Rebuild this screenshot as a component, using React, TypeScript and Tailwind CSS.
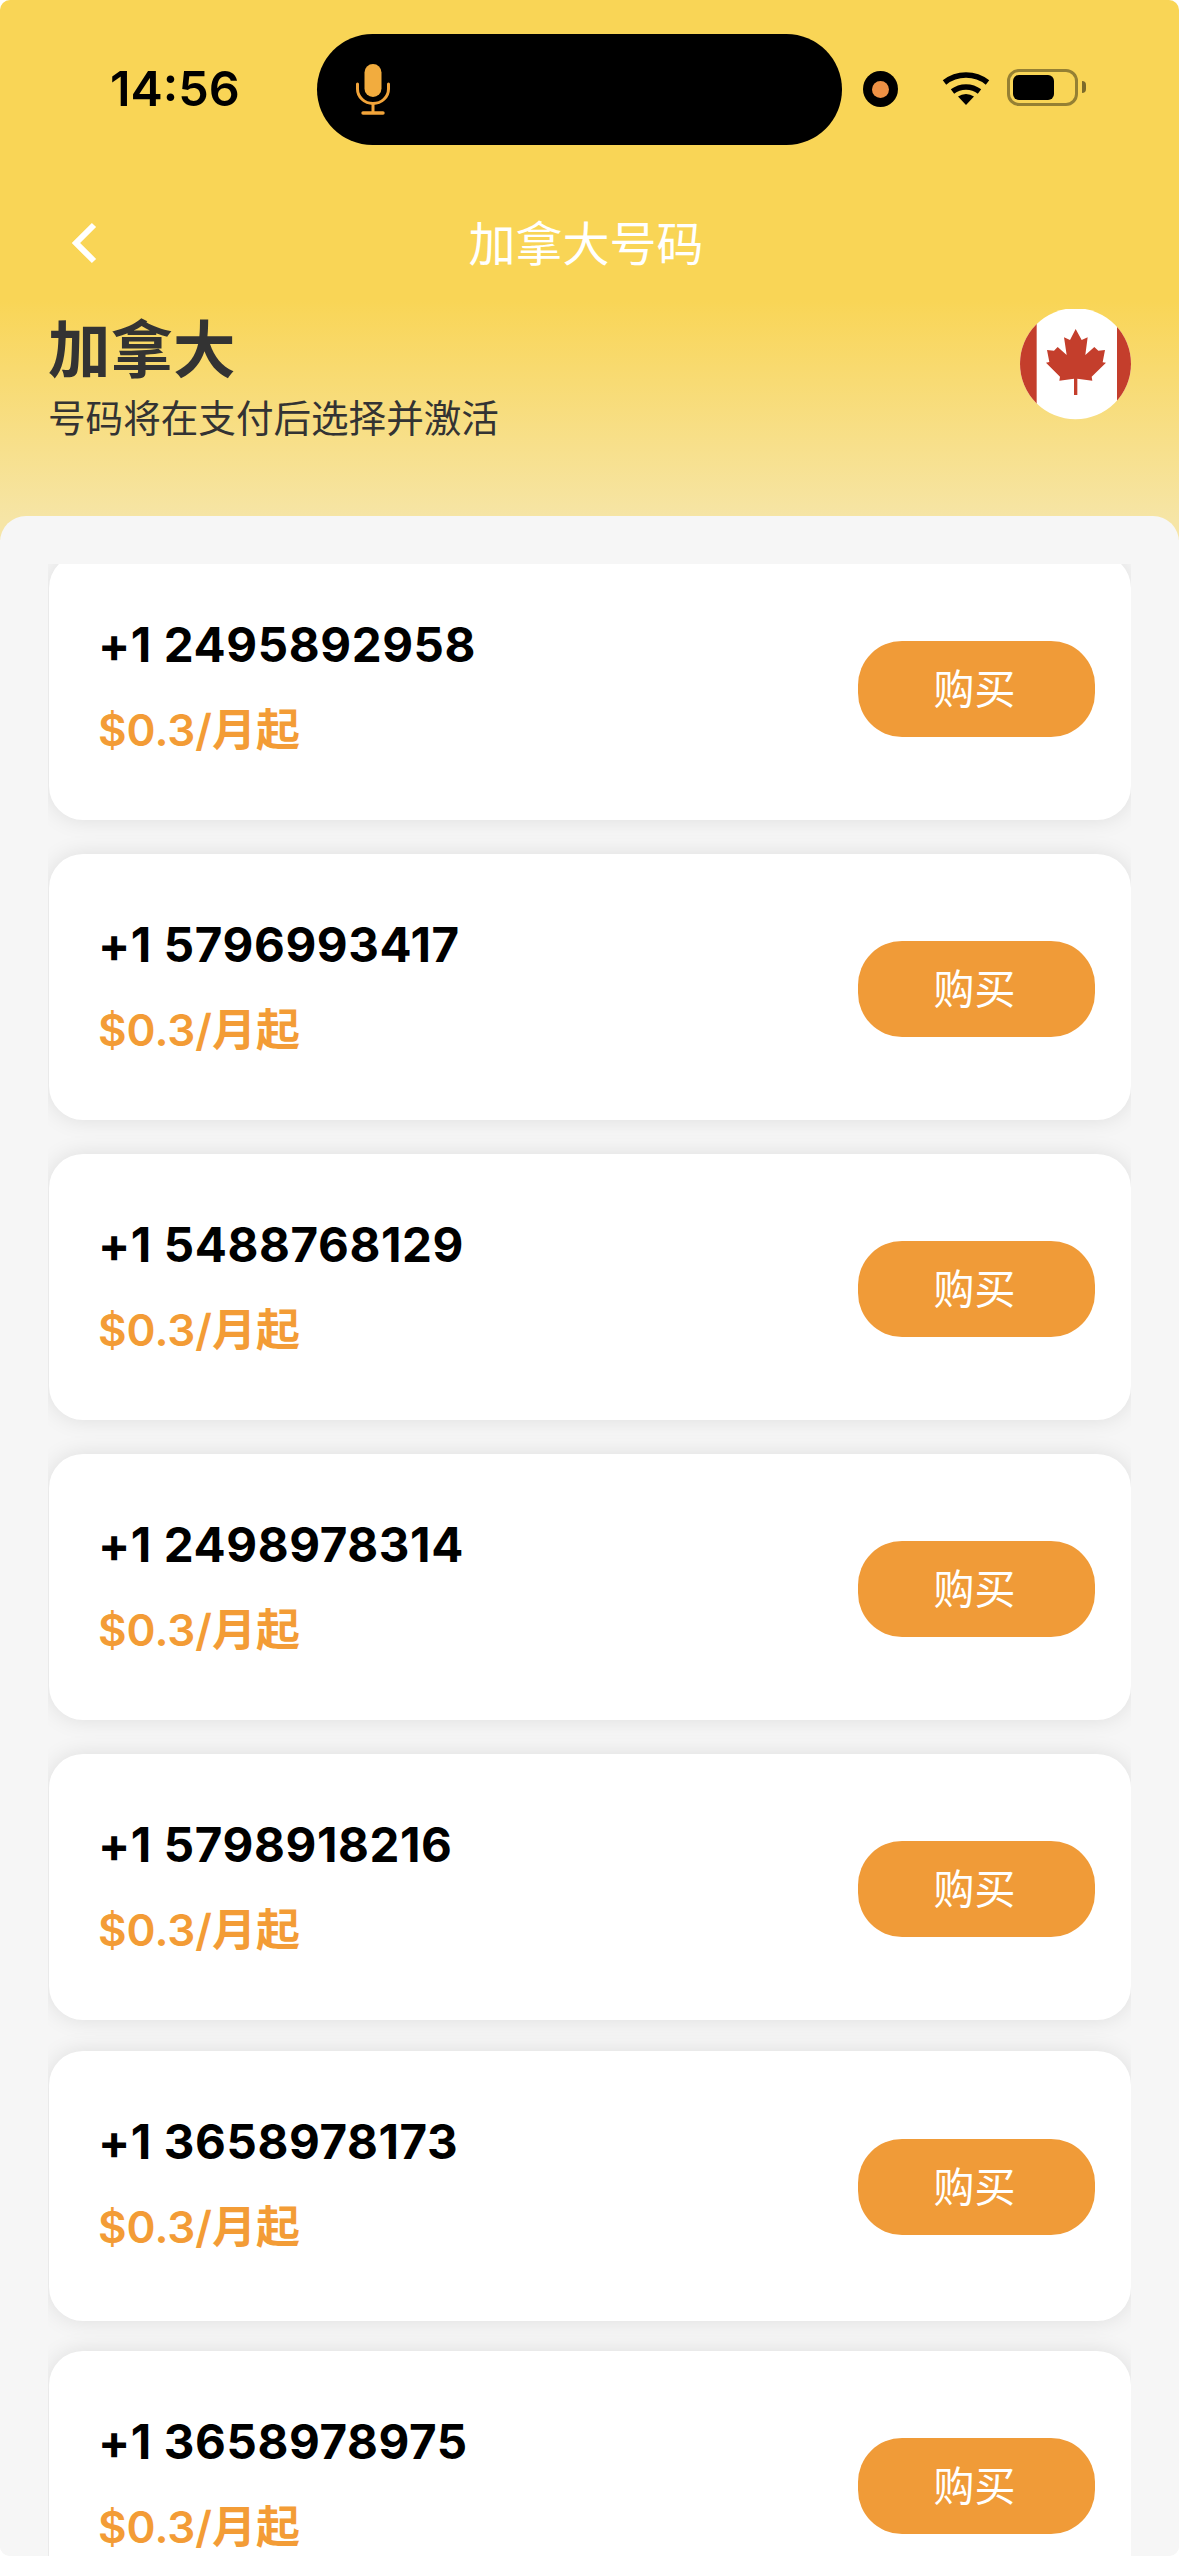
const numbers = [
  "+1 2495892958",
  "+1 5796993417",
  "+1 5488768129",
  "+1 2498978314",
  "+1 5798918216",
  "+1 3658978173",
  "+1 3658978975",
];

function MicIcon() {
  return (
    <svg width="34" height="51" viewBox="0 0 34 51" fill="none">
      <rect x="8.5" y="0" width="17" height="33" rx="8.5" fill="#f2ac3e" />
      <path d="M1.5 20v5a15.5 14.5 0 0 0 31 0v-5" stroke="#f2a43a" strokeWidth="3" strokeLinecap="round" />
      <path d="M17 39v9" stroke="#f2a43a" strokeWidth="3" />
      <path d="M7 49h20" stroke="#f2a43a" strokeWidth="3.4" strokeLinecap="round" />
    </svg>
  );
}

function WifiIcon() {
  return (
    <svg width="46" height="35" viewBox="0 0 46 35" fill="none" className="overflow-visible">
      <path d="M1.5 12.5a33 31 0 0 1 43 0" stroke="black" strokeWidth="5.5" />
      <path d="M9.5 21.5a21 19.5 0 0 1 27 0" stroke="black" strokeWidth="5.5" />
      <path d="M23 35L15 26.5a13 12 0 0 1 16 0Z" fill="black" />
    </svg>
  );
}

function CanadaFlag() {
  return (
    <svg width="111" height="111" viewBox="120 87 333 333" className="shrink-0">
      <defs>
        <clipPath id="flag-circle">
          <circle cx="286.5" cy="251" r="166.5" />
        </clipPath>
      </defs>
      <g clipPath="url(#flag-circle)">
        <rect x="120" y="87" width="333" height="333" fill="#ffffff" />
        <rect x="120" y="87" width="50" height="333" fill="#c43e2c" />
        <rect x="411" y="87" width="42" height="333" fill="#c43e2c" />
        <path
          fill="#c43e2c"
          d="M287 147L305 180L323 172L316 225L343 201L355 212L375 210L368 247L378 248L335 290L337 302L292 296V345H282V296L238 302L240 290L198 248L208 246L201 210L222 212L233 201L260 225L252 172L270 180Z"
        />
      </g>
    </svg>
  );
}

function NumberCard({ phone, className }: { phone: string; className: string }) {
  return (
    <div
      className={`shrink-0 ml-[1px] bg-white rounded-[34px] shadow-[0_0_22px_rgba(0,0,0,0.1)] flex items-center justify-between pl-[49px] pr-[36px] ${className}`}
    >
      <div className="flex flex-col mb-[1.5px]">
        <span className="text-[47.5px] leading-[56px] mt-[2px] tracking-[0.6px] font-bold text-black">{phone}</span>
        <span className="text-[44px] leading-[56px] mt-[29px] font-semibold text-[#f39c36]">$0.3/月起</span>
      </div>
      <button className="w-[237px] h-[96px] mt-[4px] pr-[4px] pt-[2px] rounded-[44px] bg-[#f09b38] text-white text-[41px] flex items-center justify-center">
        购买
      </button>
    </div>
  );
}

export default function App() {
  return (
    <div className="w-[1179px] h-[2556px] bg-white overflow-hidden">
      <div className="w-full h-full rounded-[10px] overflow-hidden flex flex-col bg-[#f6f6f6] font-[Inter,'Noto_Sans_CJK_SC',sans-serif]">
        <div className="h-[540px] shrink-0 -mb-[24px] bg-[linear-gradient(180deg,#f9d556_0px,#f9d556_300px,#f6e5a6_520px)]">
          <div className="h-[178px] flex items-center pl-[110px]">
            <span className="w-[207px] text-[48.5px] font-semibold text-black leading-none">14:56</span>
            <div className="w-[525px] h-[111px] bg-black rounded-full flex items-center pl-[39px]">
              <MicIcon />
            </div>
            <div className="ml-[21px] w-[35px] h-[36px] rounded-[50%] bg-black flex items-center justify-center">
              <div className="w-[17px] h-[17px] rounded-[50%] bg-[#ee9145]" />
            </div>
            <div className="ml-[45px] -mt-[3px]">
              <WifiIcon />
            </div>
            <div className="ml-[18px] -mt-[4px] flex items-center">
              <div className="w-[71px] h-[37px] rounded-[12px] border-[3px] border-black/40 p-[3px]">
                <div className="w-[41px] h-full rounded-[6px] bg-black" />
              </div>
              <div className="ml-[4px] w-[4px] h-[12px] rounded-r-[4px] bg-black/50" />
            </div>
          </div>
          <div className="h-[130px] grid grid-cols-[1fr_auto_1fr] items-center pl-[72px] pr-[79px]">
            <svg width="25" height="42" viewBox="0 0 25 42" fill="none">
              <path d="M22 3L4 21L22 39" stroke="white" strokeWidth="6" />
            </svg>
            <span className="text-[47px] leading-none text-white">加拿大号码</span>
            <span />
          </div>
          <div className="flex justify-between pl-[48px] pr-[48px] pt-[1px]">
            <div className="flex flex-col">
              <span className="text-[62.5px] leading-[72px] font-bold text-[#333333] mt-[5px]">加拿大</span>
              <span className="text-[37.6px] leading-[46px] text-[#333333] mt-[10px]">号码将在支付后选择并激活</span>
            </div>
            <CanadaFlag />
          </div>
        </div>
        <div className="relative flex-1 rounded-t-[26px] bg-[#f6f6f6] pt-[48px] min-h-0 flex flex-col">
          <div className="flex-1 min-h-0 ml-[48px] w-[1083px] overflow-hidden flex flex-col">
            <div className="-mt-[10px] flex flex-col gap-[34px]">
              {numbers.map((phone, i) => (
                <NumberCard
                  key={phone}
                  phone={phone}
                  className={i === 5 ? "h-[270px] -mt-[3px] pb-[3px]" : i === 6 ? "h-[266px] -mt-[4px]" : "h-[266px]"}
                />
              ))}
            </div>
          </div>
        </div>
      </div>
    </div>
  );
}
